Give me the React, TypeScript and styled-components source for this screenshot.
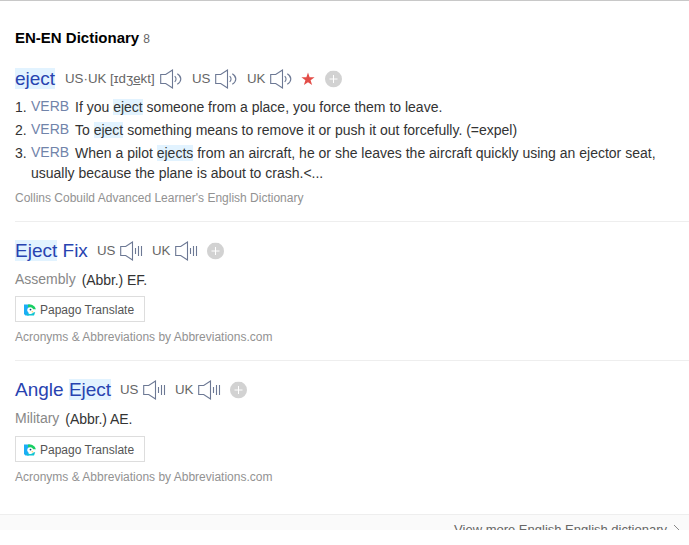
import React from 'react';
import styled, { createGlobalStyle } from 'styled-components';

const GlobalStyle = createGlobalStyle`
  * { box-sizing: border-box; }
  body { margin: 0; background: #fff; font-family: "Liberation Sans", Arial, sans-serif; color: #333; }
`;

const Page = styled.main`
  height: 530px;
  overflow: hidden;
  border-top: 1px solid #c8c8c8;
  white-space: nowrap;
`;
const Heading = styled.h2`
  display: flex;
  align-items: center;
  gap: 4px;
  margin: 0;
  padding: 27px 0 0 15px;
  height: 47px;
  line-height: 20px;
  font-size: 15px;
  color: #000;
`;
const Count = styled.span`
  font-size: 12px;
  font-weight: 400;
  color: #666;
  transform: translateY(1px);
`;
const Entry = styled.article<{ $height: number; $top: number }>`
  height: ${(p) => p.$height}px;
  margin-left: 15px;
  padding-top: ${(p) => p.$top}px;
  border-bottom: 1px solid #eee;
  &:last-of-type { border-bottom: 0; }
`;
const WordRow = styled.div`
  display: flex;
  align-items: center;
  height: 22px;
`;
const Word = styled.span<{ $width: number }>`
  width: ${(p) => p.$width}px;
  margin-right: 10px;
  font-size: 19px;
  line-height: 20px;
  color: #2843b0;
`;
const Mark = styled.mark`
  color: inherit;
  background: #e2f3ff;
`;
const Accent = styled.span<{ $width: number }>`
  flex: none;
  width: ${(p) => p.$width}px;
  font-size: 13.3px;
  line-height: 20px;
  color: #666;
`;
const Speaker = styled.svg`
  flex: none;
  width: 23px;
  height: 20px;
  margin-right: 9px;
  fill: none;
  stroke: #6c7894;
  stroke-width: 1.1;
`;
const Star = styled.svg`
  width: 14px;
  height: 14px;
  margin: 0 10px 0 -1px;
  fill: #e34d48;
`;
const Plus = styled.svg`
  width: 17px;
  height: 17px;
  transform: translateY(-0.5px);
`;
const Meanings = styled.ol`
  list-style: none;
  margin: 7px 0 0;
  padding: 0;
  font-size: 14px;
  line-height: 20px;
`;
const Meaning = styled.li`
  display: grid;
  grid-template-columns: 16px 1fr;
  margin-bottom: 3px;
`;
const Part = styled.span`
  display: inline-block;
  width: 44px;
  line-height: 18px;
  color: #7184aa;
  transform: translateY(-1px);
`;
const Source = styled.p`
  margin: 7px 0 0;
  font-size: 12px;
  line-height: 16px;
  color: #929292;
`;
const Abbreviation = styled.p<{ $gap: number }>`
  display: flex;
  gap: 6px;
  margin: 8px 0 ${(p) => p.$gap}px;
  font-size: 14px;
  line-height: 20px;
`;
const Field = styled.span`
  color: #888;
  line-height: 18px;
`;
const Value = styled.span`
  letter-spacing: -0.07px;
`;
const Translate = styled.button`
  display: flex;
  align-items: center;
  width: 130px;
  height: 26px;
  padding: 1px 0 0 8px;
  gap: 4px;
  border: 1px solid #ddd;
  background: #fff;
  font: 12px "Liberation Sans", Arial, sans-serif;
  color: #555;
`;
const Footer = styled.footer`
  display: flex;
  justify-content: flex-end;
  height: 16px;
  padding: 6px 9px 0 0;
  border-top: 1px solid #eee;
  background: #fafafa;
  font-size: 13px;
  line-height: 17px;
  color: #666;
`;
const Chevron = styled.svg`
  width: 7px;
  height: 12px;
  margin: 3px 0 0 6px;
  fill: none;
  stroke: #888;
`;

function Sound({ bars = false }: { bars?: boolean }) {
  return (
    <Speaker viewBox="0 0 23 20">
      <path d="M.7 5.5h5L12.5 1v18l-6.8-4.5h-5z" />
      {bars
        ? <path d="M15.5 7v6M18.5 5v10M21.5 5v10" />
        : <path d="M14.7 7.2c1.8 1.7 1.8 3.9 0 5.6M17.3 4.8c4.7 3 4.7 7.4 0 10.4" />}
    </Speaker>
  );
}

function Add() {
  return (
    <Plus viewBox="0 0 17 17">
      <circle cx="8.5" cy="8.5" r="8.5" fill="#d2d2d2" />
      <path d="M4.5 8.5h8M8.5 4.5v8" stroke="#fff" fill="none" />
    </Plus>
  );
}

function Papago() {
  return (
    <svg width="12" height="12" viewBox="0 0 12 12">
      <path d="M0 .5h6v3L4 6l1 5.5H1.5L0 10z" fill="#1badf5" />
      <path d="M4 .5c4.5-.4 7.3 1.7 7.8 5H7L4 3z" fill="#18cf63" />
      <path d="M3.2 6.2a3 3 0 0 1 3-3c1.7 0 2.8 1 3 2.3H12L10.4 8H9c-2 1-5.8.9-5.8-1.8z" fill="#fff" />
      <circle cx="6.5" cy="5.6" r=".9" fill="#16437a" />
      <path d="M3 9c2 1.6 5.2 1.2 6.8-.8h1.4L10 11.5H3z" fill="#12c4d2" />
      <path d="M7.5 7.2h1.8l-1.2 1.6z" fill="#ffc83d" />
    </svg>
  );
}

function Pronunciations() {
  return <><Accent $width={23}>US</Accent><Sound bars /><Accent $width={23}>UK</Accent><Sound bars /><Add /></>;
}

function AbbreviationDetails({ field, value, gap = 6 }: { field: string; value: string; gap?: number }) {
  return (
    <>
      <Abbreviation $gap={gap}><Field>{field}</Field><Value>(Abbr.) {value}.</Value></Abbreviation>
      <Translate><Papago />Papago Translate</Translate>
      <Source>Acronyms &amp; Abbreviations by Abbreviations.com</Source>
    </>
  );
}

export default function App() {
  return (
    <>
      <GlobalStyle />
      <Page>
        <Heading>EN-EN Dictionary <Count>8</Count></Heading>
        <Entry $height={174} $top={20}>
          <WordRow>
            <Word $width={40}><Mark>eject</Mark></Word>
            <Accent $width={95}>US·UK [ɪdʒ<u>e</u>kt]</Accent><Sound />
            <Accent $width={23}>US</Accent><Sound />
            <Accent $width={23}>UK</Accent><Sound />
            <Star viewBox="0 0 14 14"><path d="M7 .5l1.6 4.8h5l-4 3 1.5 4.8L7 10.2l-4.1 2.9 1.5-4.8-4-3h5z" /></Star>
            <Add />
          </WordRow>
          <Meanings>
            <Meaning><span>1.</span><span><Part>VERB</Part>If you <Mark>eject</Mark> someone from a place, you force them to leave.</span></Meaning>
            <Meaning><span>2.</span><span><Part>VERB</Part>To <Mark>eject</Mark> something means to remove it or push it out forcefully. (=expel)</span></Meaning>
            <Meaning><span>3.</span><span><Part>VERB</Part>When a pilot <Mark>ejects</Mark> from an aircraft, he or she leaves the aircraft quickly using an ejector seat,<br />usually because the plane is about to crash.&lt;...</span></Meaning>
          </Meanings>
          <Source>Collins Cobuild Advanced Learner's English Dictionary</Source>
        </Entry>
        <Entry $height={139} $top={18}>
          <WordRow><Word $width={72}><Mark>Eject</Mark> Fix</Word><Pronunciations /></WordRow>
          <AbbreviationDetails field="Assembly" value="EF" />
        </Entry>
        <Entry $height={153} $top={18}>
          <WordRow><Word $width={95}>Angle <Mark>Eject</Mark></Word><Pronunciations /></WordRow>
          <AbbreviationDetails field="Military" value="AE" gap={7} />
        </Entry>
        <Footer>View more English English dictionary<Chevron viewBox="0 0 7 12"><path d="M1 1l5 5-5 5" /></Chevron></Footer>
      </Page>
    </>
  );
}
